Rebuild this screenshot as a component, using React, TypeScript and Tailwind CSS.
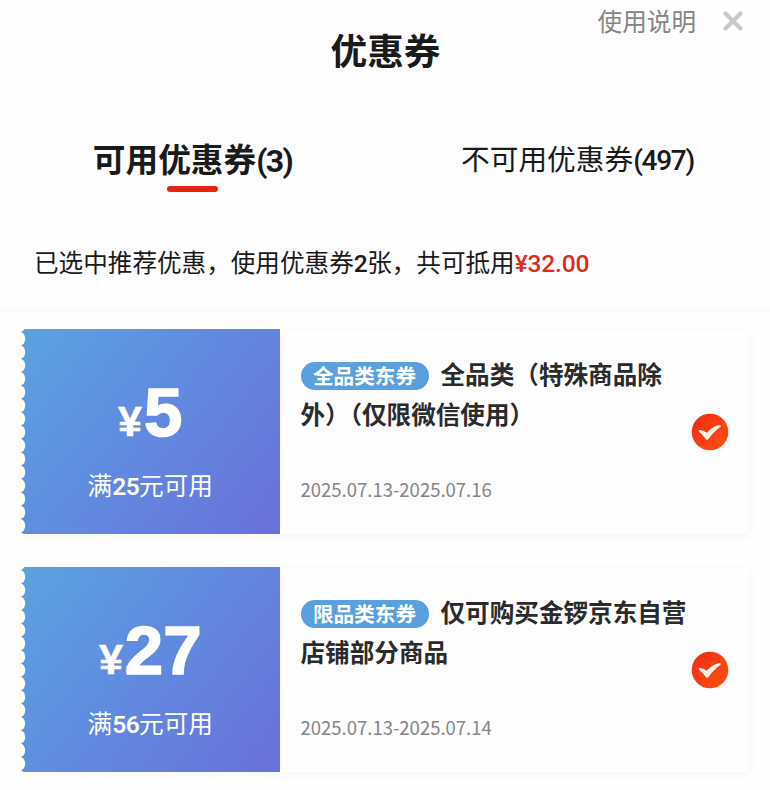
import React from 'react';

type Coupon = {
  amount: string;
  threshold: string;
  tag: string;
  lines: string[];
  period: string;
};

const coupons: Coupon[] = [
  {
    amount: '5',
    threshold: '25',
    tag: '全品类东券',
    lines: ['全品类（特殊商品除', '外）（仅限微信使用）'],
    period: '2025.07.13-2025.07.16',
  },
  {
    amount: '27',
    threshold: '56',
    tag: '限品类东券',
    lines: ['仅可购买金锣京东自营', '店铺部分商品'],
    period: '2025.07.13-2025.07.14',
  },
];

// Perforated left edge of the ticket
const TicketEdge = () => (
  <svg className="absolute left-0 top-0" width="6" height="206" viewBox="0 0 6 206">
    {Array.from({ length: 17 }, (_, i) => (
      <ellipse key={i} cx="-0.8" cy={-3.6 + i * 13.35} rx="5" ry="6.6" fill="#fefefe" />
    ))}
  </svg>
);

const CheckBadge = () => (
  <svg width="38" height="38" viewBox="0 0 38 38">
    <defs>
      <linearGradient id="badge" x1="0" y1="0" x2="1" y2="1">
        <stop offset="0" stopColor="#f32b12" />
        <stop offset="1" stopColor="#fa5312" />
      </linearGradient>
    </defs>
    <circle cx="19" cy="19" r="18.3" fill="url(#badge)" />
    <path
      d="M9 17 C10.8 17 13.3 18.2 15.8 19.8 C18.8 16 23.5 12.8 28.6 11.9 C30 11.9 30.3 13 29.3 13.9 C24.6 17 20.9 21.3 17.7 25.7 C16.7 27 15.4 27 14.5 25.8 C12.8 23 10.8 21 8.2 18.9 C7.2 17.9 7.7 17 9 17 Z"
      fill="#fff6ea"
    />
  </svg>
);

const CouponCard = ({ coupon }: { coupon: Coupon }) => (
  <div className="flex h-[205px] w-[728px] rounded-r-md border-t border-[#fafafa] bg-[#fefefe] shadow-[2px_3px_8px_rgba(0,0,0,0.03)]">
    <div className="relative -mt-px flex w-[258.5px] flex-col items-center bg-[linear-gradient(128deg,#5aa3e1_0%,#6189df_50%,#6a70da_100%)] text-white">
      <TicketEdge />
      <div className="mt-[44px] flex h-[80px] items-baseline font-['Liberation_Sans'] font-bold leading-[80px]">
        <span className="mr-[2px] text-[43px] [-webkit-text-stroke:0.5px_white]">¥</span>
        <span className="text-[69px] [-webkit-text-stroke:1.6px_white]">{coupon.amount}</span>
      </div>
      <div className="mt-[13px] h-[36px] text-[24.6px] leading-[36px]">
        满<span className="font-['Roboto'] font-semibold tracking-[-0.6px]">{coupon.threshold}</span>元可用
      </div>
    </div>
    <div className="flex flex-1 items-center justify-between pl-[21px] pr-[20px]">
      <div className="h-full whitespace-nowrap pt-[23px]">
        <div className="flex h-[40px] items-center text-[24.6px] font-bold text-[#2b2b2b]">
          <span className="mt-[6px] mr-[12px] flex h-[28px] w-[128px] items-center justify-center rounded-full bg-[#5b9fdf] pb-px text-[20.6px] text-white">
            {coupon.tag}
          </span>
          {coupon.lines[0]}
        </div>
        <div className="h-[40px] text-[24.6px] font-bold leading-[40px] text-[#2b2b2b]">{coupon.lines[1]}</div>
        <div className="mt-[41px] text-[18.5px] leading-[30px] text-[#868686]">{coupon.period}</div>
      </div>
      <div className="-ml-10">
        <CheckBadge />
      </div>
    </div>
  </div>
);

export default function App() {
  return (
    <div className="h-[790px] w-[770px] overflow-hidden bg-[#fefefe] font-['Noto_Sans_CJK_SC',sans-serif] text-[#1a1a1a]">
      <header className="relative flex h-[100px] justify-center pl-px pt-[22px]">
        <h1 className="text-[36.7px] font-bold leading-[54px]">优惠券</h1>
        <div className="absolute right-[27px] top-[3px] flex h-[34px] items-center gap-[27px]">
          <span className="text-[24.6px] leading-[34px] text-[#868686]">使用说明</span>
          <svg className="mt-[2px]" width="20" height="20" viewBox="0 0 20 20" fill="none" stroke="#c8c8c8" strokeWidth="4.2" strokeLinecap="round">
            <path d="M2.5 2.5 17.5 17.5M17.5 2.5 2.5 17.5" />
          </svg>
        </div>
      </header>

      <nav className="mx-[34px] flex h-[114px] border-b border-[#fafafa]">
        <div className="flex w-[317px] flex-col items-center pt-[34px]">
          <div className="whitespace-nowrap text-[32.7px] font-bold leading-[48px]">
            可用优惠券<span className="font-['Roboto'] text-[32px] tracking-[-1.6px]">(3)</span>
          </div>
          <div className="mt-[1px] h-[6px] w-[51px] rounded-full bg-[#e8230f]" />
        </div>
        <div className="flex flex-1 justify-center pl-[68px] pt-[36px]">
          <div className="whitespace-nowrap text-[28.7px] leading-[44px]">
            不可用优惠券<span className="font-['Roboto'] text-[28px] font-medium tracking-[-1.3px]">(497)</span>
          </div>
        </div>
      </nav>

      <section className="flex h-[95px] items-center whitespace-nowrap pl-[34px] pt-[2px] text-[24.6px]">
        <p>
          已选中推荐优惠，使用优惠券<span className="font-['Roboto'] font-medium tracking-[-0.6px]">2</span>张，共可抵用
          <span className="font-['Roboto'] font-medium tracking-[-0.2px] text-[#dc2a1f]">¥32.00</span>
        </p>
      </section>

      <main className="flex h-[481px] flex-col gap-[33px] border-t-4 border-[#fafafa] pl-[21px] pt-[16px]">
        {coupons.map((coupon) => (
          <CouponCard key={coupon.period} coupon={coupon} />
        ))}
      </main>
    </div>
  );
}
